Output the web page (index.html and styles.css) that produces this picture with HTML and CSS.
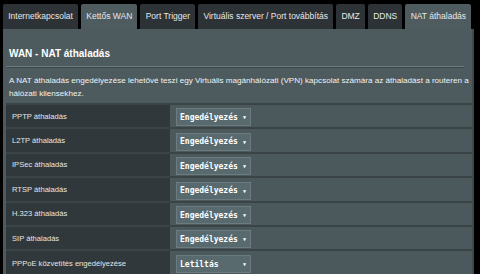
FILE: index.html
```html
<!DOCTYPE html>
<html lang="hu">
<head>
  <meta charset="UTF-8" />
  <title>WAN - NAT áthaladás</title>
  <link rel="stylesheet" href="styles.css">
</head>
<body>
  <nav class="tabs">
    <div class="tab">Internetkapcsolat</div>
    <div class="tab tab-lit">Kettős WAN</div>
    <div class="tab">Port Trigger</div>
    <div class="tab">Virtuális szerver / Port továbbítás</div>
    <div class="tab">DMZ</div>
    <div class="tab">DDNS</div>
    <div class="tab tab-lit">NAT áthaladás</div>
  </nav>

  <section class="panel">
    <h1>WAN - NAT áthaladás</h1>
    <p class="leiras">A NAT áthaladás engedélyezése lehetővé teszi egy Virtuális magánhálózati (VPN) kapcsolat számára az áthaladást a routeren a hálózati kliensekhez.</p>

    <table class="beall">
      <tr><th>PPTP áthaladás</th><td><span class="valaszt">Engedélyezés<i>▼</i></span></td></tr>
      <tr><th>L2TP áthaladás</th><td><span class="valaszt">Engedélyezés<i>▼</i></span></td></tr>
      <tr><th>IPSec áthaladás</th><td><span class="valaszt">Engedélyezés<i>▼</i></span></td></tr>
      <tr><th>RTSP áthaladás</th><td><span class="valaszt">Engedélyezés<i>▼</i></span></td></tr>
      <tr><th>H.323 áthaladás</th><td><span class="valaszt">Engedélyezés<i>▼</i></span></td></tr>
      <tr><th>SIP áthaladás</th><td><span class="valaszt">Engedélyezés<i>▼</i></span></td></tr>
      <tr><th>PPPoE közvetítés engedélyezése</th><td><span class="valaszt">Letiltás<i>▼</i></span></td></tr>
    </table>
  </section>
</body>
</html>
```

FILE: styles.css
```css
* {
  margin: 0;
  padding: 0;
  box-sizing: border-box;
}

body {
  background: #000;
  color: #fff;
  font-family: 'Liberation Sans', Arial, sans-serif;
  padding: 4px 6px 0 3px;
}

.tabs {
  display: flex;
  gap: 3px;
  height: 25px;
}
.tab {
  background: #2c3235;
  color: #e6e8e9;
  font-size: 8.5px;
  line-height: 25px;
  padding: 0 5.2px;
  border-radius: 2px 2px 0 0;
  white-space: nowrap;
}
.tab-lit {
  background: #4e5b5f;
}

.panel {
  background: #4d5a5e;
  border-right: 2px solid #3e4a4d;
  padding: 16px 0 0 3px;
  height: 245px;
}

h1 {
  font-size: 10px;
  font-weight: bold;
  color: #fff;
  padding: 3px 3px 7px;
  margin-right: 8px;
  border-bottom: 1px solid #6d7a7e;
  box-shadow: 0 1px 0 #3d484b;
}

.leiras {
  font-size: 8.1px;
  line-height: 13px;
  color: #f0f2f2;
  padding: 7px 0 3px 3px;
}

.beall {
  width: 100%;
  border-collapse: collapse;
}
.beall tr {
  height: 24.4px;
  border-top: 2px solid #3a4447;
}
.beall th {
  width: 164px;
  background: #30383b;
  color: #e4e6e7;
  font-size: 7.6px;
  font-weight: normal;
  text-align: left;
  padding-left: 6px;
}
.beall td {
  background: #4b595c;
  padding-left: 6px;
}

.valaszt {
  display: inline-flex;
  align-items: center;
  justify-content: space-between;
  width: 75px;
  height: 18px;
  background: #596a6e;
  border: 1px solid #6b7b7f;
  color: #fff;
  font-family: 'DejaVu Sans Mono', monospace;
  font-weight: bold;
  font-size: 8px;
  padding: 0 4px 0 3px;
}
.valaszt i {
  font-style: normal;
  font-size: 5px;
}
```
